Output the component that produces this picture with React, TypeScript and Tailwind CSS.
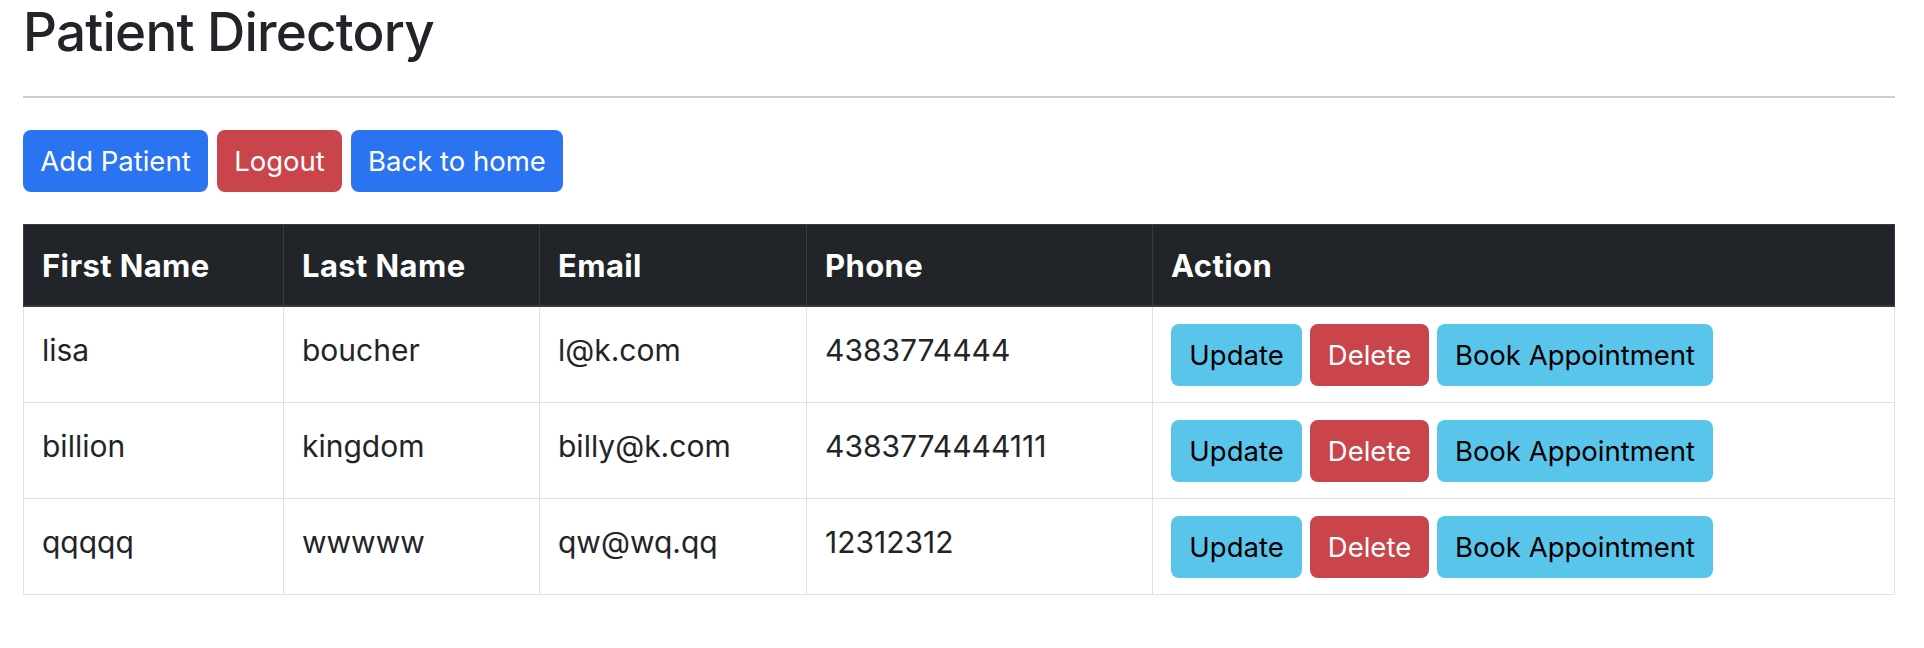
import React from 'react';

interface Patient {
  first: string;
  last: string;
  email: string;
  phone: string;
}

const patients: Patient[] = [
  { first: 'lisa', last: 'boucher', email: 'l@k.com', phone: '4383774444' },
  { first: 'billion', last: 'kingdom', email: 'billy@k.com', phone: '4383774444111' },
  { first: 'qqqqq', last: 'wwwww', email: 'qw@wq.qq', phone: '12312312' },
];

const btn =
  'inline-flex items-center justify-center h-[62px] rounded-[8px] text-[27.5px] leading-[40px] whitespace-nowrap';

const th =
  'border border-b-2 border-[#373b3e] px-[18px] pt-[19px] pb-[17px] text-left font-bold text-[31px] tracking-[0.4px]';
const td = 'border border-[#dee2e6] px-[18px] pt-[21px] pb-[16px] align-top';

export default function App() {
  return (
    <div
      className="w-[1924px] h-[648px] bg-white text-[#212529] pl-[23px] pr-[29px]"
      style={{ fontFamily: 'Inter, "Noto Sans", sans-serif' }}
    >
      <h1 className="text-[53px] leading-[64px] font-medium tracking-[-0.8px]">Patient Directory</h1>
      <hr className="mt-[32px] h-[2px] border-0 bg-[#cdcdcd]" />

      <div className="mt-[32px] flex gap-[9px]">
        <button className={`${btn} w-[185px] bg-[#2a74f2] text-white`}>Add Patient</button>
        <button className={`${btn} w-[125px] bg-[#c9444b] text-white`}>Logout</button>
        <button className={`${btn} w-[212px] bg-[#2a74f2] text-white`}>Back to home</button>
      </div>

      <table className="mt-[32px] w-[1872px] table-fixed border-collapse text-[30px] leading-[44px]">
        <thead>
          <tr className="bg-[#212529] text-white">
            <th className={`${th} w-[260px]`}>First Name</th>
            <th className={`${th} w-[256px]`}>Last Name</th>
            <th className={`${th} w-[267px]`}>Email</th>
            <th className={`${th} w-[346px]`}>Phone</th>
            <th className={th}>Action</th>
          </tr>
        </thead>
        <tbody>
          {patients.map((p) => (
            <tr key={p.email}>
              <td className={td}>{p.first}</td>
              <td className={td}>{p.last}</td>
              <td className={td}>{p.email}</td>
              <td className={td}>{p.phone}</td>
              <td className="border border-[#dee2e6] px-[18px] pt-[17px] pb-[16px] align-top">
                <div className="flex gap-[8px]">
                  <button className={`${btn} w-[131px] bg-[#5ac5ea] text-black`}>Update</button>
                  <button className={`${btn} w-[119px] bg-[#c9444b] text-white`}>Delete</button>
                  <button className={`${btn} w-[276px] bg-[#5ac5ea] text-black`}>Book Appointment</button>
                </div>
              </td>
            </tr>
          ))}
        </tbody>
      </table>
    </div>
  );
}
